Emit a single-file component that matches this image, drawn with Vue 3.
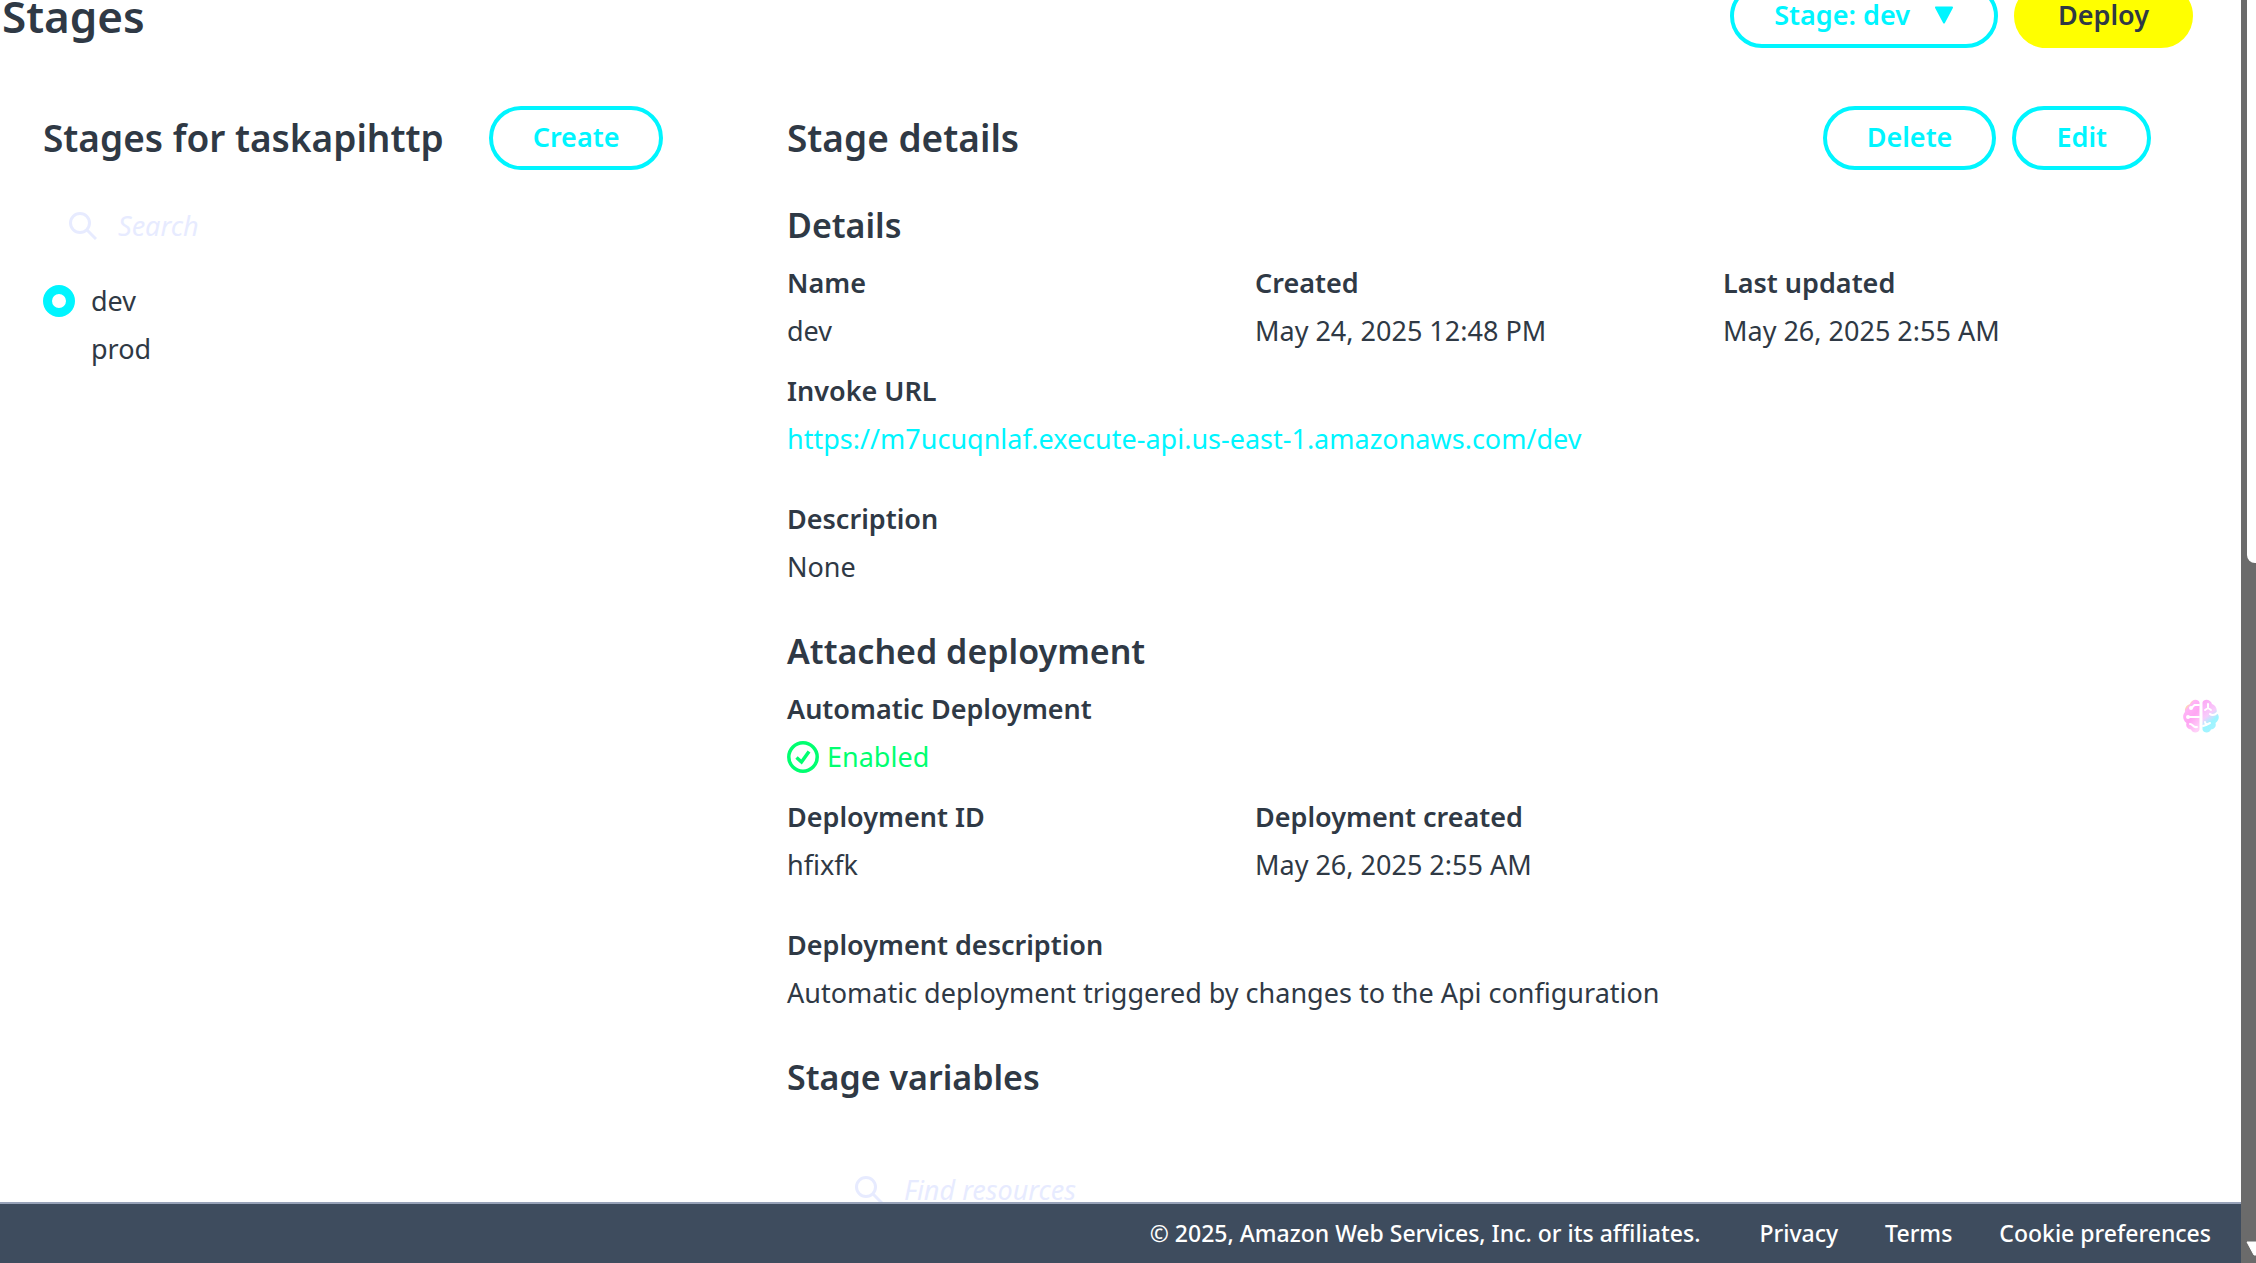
<script setup>
import { ref } from 'vue'

const stages = ['dev', 'prod']
const selected = ref('dev')
const stageQuery = ref('')
const resourceQuery = ref('')
</script>

<template>
  <div class="page">
    <div class="view">
      <main class="content">
        <header class="top">
          <h1>Stages</h1>
          <div class="actions">
            <button type="button" class="btn" aria-haspopup="menu">
              Stage: dev
              <svg class="caret" viewBox="0 0 20 18" aria-hidden="true">
                <path d="M2 1.500h16L10 16.500z" fill="currentColor" stroke="currentColor" stroke-width="2" stroke-linejoin="round" />
              </svg>
            </button>
            <button type="button" class="btn primary">Deploy</button>
          </div>
        </header>

        <div class="columns">
          <section class="stages">
            <div class="bar">
              <h2>Stages for taskapihttp</h2>
              <button type="button" class="btn">Create</button>
            </div>
            <label class="search">
              <svg viewBox="0 0 28 28" aria-hidden="true"><circle cx="11" cy="11" r="9.500" /><path d="M18 18l9 9" /></svg>
              <input v-model="stageQuery" type="text" placeholder="Search" aria-label="Search stages" />
            </label>
            <div class="radios" role="radiogroup" aria-label="Stages">
              <label v-for="s in stages" :key="s">
                <input v-model="selected" type="radio" name="stage" :value="s" />
                {{ s }}
              </label>
            </div>
          </section>

          <section class="details">
            <div class="bar">
              <h2>Stage details</h2>
              <div class="actions">
                <button type="button" class="btn">Delete</button>
                <button type="button" class="btn">Edit</button>
              </div>
            </div>

            <h3 class="first">Details</h3>
            <dl class="grid">
              <div><dt>Name</dt><dd>dev</dd></div>
              <div><dt>Created</dt><dd>May 24, 2025 12:48 PM</dd></div>
              <div><dt>Last updated</dt><dd>May 26, 2025 2:55 AM</dd></div>
              <div class="wide">
                <dt>Invoke URL</dt>
                <dd><a href="https://m7ucuqnlaf.execute-api.us-east-1.amazonaws.com/dev">https://m7ucuqnlaf.execute-api.us-east-1.amazonaws.com/dev</a></dd>
              </div>
            </dl>
            <dl class="grid apart">
              <div class="wide"><dt>Description</dt><dd>None</dd></div>
            </dl>

            <h3>Attached deployment</h3>
            <dl class="grid">
              <div class="wide">
                <dt>Automatic Deployment</dt>
                <dd class="enabled">
                  <svg viewBox="0 0 32 32" aria-hidden="true"><circle cx="16" cy="16" r="14.200" /><path d="M9.500 16.500l5 4.500 7.500-10.500" /></svg>
                  Enabled
                </dd>
              </div>
              <div><dt>Deployment ID</dt><dd>hfixfk</dd></div>
              <div><dt>Deployment created</dt><dd>May 26, 2025 2:55 AM</dd></div>
            </dl>
            <dl class="grid apart">
              <div class="wide"><dt>Deployment description</dt><dd>Automatic deployment triggered by changes to the Api configuration</dd></div>
            </dl>

            <h3>Stage variables</h3>
            <label class="search resources">
              <svg viewBox="0 0 28 28" aria-hidden="true"><circle cx="11" cy="11" r="9.500" /><path d="M18 18l9 9" /></svg>
              <input v-model="resourceQuery" type="text" placeholder="Find resources" aria-label="Find resources" />
            </label>
          </section>
        </div>
      </main>

      <footer class="footer">
        <span>© 2025, Amazon Web Services, Inc. or its affiliates.</span>
        <a href="#privacy">Privacy</a>
        <a href="#terms">Terms</a>
        <a href="#cookies">Cookie preferences</a>
      </footer>
    </div>

    <div class="track" aria-hidden="true">
      <div class="thumb"></div>
      <svg class="arrow" viewBox="0 0 10 22"><path d="M1 1h9v13h-2z" fill="#fff" stroke="#fff" stroke-linejoin="round" /></svg>
    </div>

    <svg class="brain" viewBox="0 0 36 34" aria-hidden="true">
      <defs>
        <linearGradient id="lobe-left" x1="0.100" y1="0" x2="0.700" y2="1">
          <stop offset="0.150" stop-color="#fff27a" />
          <stop offset="0.280" stop-color="#ffb4f6" />
          <stop offset="0.600" stop-color="#ffa6f3" />
          <stop offset="1" stop-color="#ffd0f8" />
        </linearGradient>
        <linearGradient id="lobe-right" x1="0.200" y1="0" x2="0.600" y2="1">
          <stop offset="0" stop-color="#fbaaf5" />
          <stop offset="0.450" stop-color="#f8ccfb" />
          <stop offset="0.700" stop-color="#9cf5ff" />
          <stop offset="1" stop-color="#a8f2ff" />
        </linearGradient>
      </defs>
      <path fill="url(#lobe-left)" d="M16.500 3.500v27C16 34 9.500 35 8 30.500 4 30 2.500 27 3.500 24-.5 21-.8 16 2 13 1.500 8.500 4 6 7 5c1-5 8.500-6 9.500-1.500z" />
      <path fill="url(#lobe-right)" d="M19.500 3.500v27c.5 3.500 7 4.500 8.500 0 4-.5 5.500-3.500 4.500-6.500 4-3 4.300-8 1-10 1-4.500-1-8-4.500-9-1-5-8.500-6-9.500-1.500z" />
      <g fill="none" stroke="#fff" stroke-width="2" stroke-linecap="round">
        <path d="M16 6h-4.500l-3 3M16 18H5M14 28c-4 1-4-3-7-3" />
        <path d="M25 5v4l-3 2M25 9l3 2M34 14c-3 3-6 2-7 1M20 27l3-1-1-3M23 26l4-2" />
        <circle cx="5" cy="18" r="1" /><circle cx="8" cy="9" r="1" />
      </g>
    </svg>
  </div>
</template>

<style>
body {
  background: #fff;
  overflow: hidden;
}
</style>

<style scoped>
.page {
  --cyan: #00f5ff;
  --ink: #2f3945;
  --faint: #e7ebff;
  display: flex;
  height: 100vh;
  position: relative;
  color: var(--ink);
  font: 400 27px/34px "Noto Sans", "Open Sans", sans-serif;
}
.view {
  flex: 1;
  min-width: 0;
  display: flex;
  flex-direction: column;
}
.content {
  flex: 1;
  min-height: 0;
  overflow: hidden;
}
h1, h2, h3, dl, dd { margin: 0; }
h1, h2, h3, dt { font-weight: 600; }
h1 { font-size: 44px; line-height: 64px; }
h2 { font-size: 37px; line-height: 64px; white-space: nowrap; }
h3 { font-size: 34px; line-height: 46px; margin: 44px 0 18px; }
h3.first { margin-top: 32px; }
.top {
  display: flex;
  justify-content: space-between;
  margin-top: -16px;
  padding: 0 48px 0 2px;
}
.actions { display: flex; gap: 16px; }
.columns {
  display: grid;
  grid-template-columns: 620px 1fr;
  column-gap: 124px;
  padding: 58px 90px 0 43px;
}
.bar { display: flex; align-items: center; }
.stages .bar { gap: 45px; }
.details .bar { justify-content: space-between; }
.btn {
  display: flex;
  align-items: center;
  gap: 24px;
  height: 64px;
  padding: 0 40px 2px;
  border: 4px solid var(--cyan);
  border-radius: 32px;
  background: #fff;
  color: var(--cyan);
  font: inherit;
  font-weight: 600;
  white-space: nowrap;
}
.btn.primary {
  background: #ff0;
  border-color: #ff0;
  color: var(--ink);
}
.caret { width: 20px; height: 18px; }
.search {
  display: flex;
  align-items: center;
  gap: 21px;
  height: 64px;
  margin-top: 24px;
  padding-left: 26px;
}
.search svg {
  flex: none;
  width: 28px;
  height: 28px;
  fill: none;
  stroke: var(--faint);
  stroke-width: 3;
}
.search input {
  flex: 1;
  min-width: 0;
  padding: 0;
  border: 0;
  outline: 0;
  background: none;
  color: var(--ink);
  font: inherit;
  font-style: italic;
}
.search input::placeholder { color: var(--faint); opacity: 1; }
.search.resources { margin-top: 58px; padding-left: 68px; }
.radios {
  display: flex;
  flex-direction: column;
  gap: 14px;
  margin-top: 26px;
}
.radios label {
  display: flex;
  align-items: center;
  gap: 16px;
}
.radios input {
  appearance: none;
  width: 32px;
  height: 32px;
  margin: 0;
  border: 2px solid #fff;
  border-radius: 50%;
}
.radios input:checked { border: 9px solid var(--cyan); }
.grid {
  display: grid;
  grid-template-columns: repeat(3, 1fr);
  gap: 26px 40px;
}
.grid.apart { margin-top: 46px; }
.grid .wide { grid-column: 1 / -1; }
dt { margin-bottom: 14px; }
dd a { color: var(--cyan); text-decoration: none; }
.enabled {
  display: flex;
  align-items: center;
  gap: 8px;
  color: #00ff70;
}
.enabled svg {
  width: 32px;
  height: 32px;
  fill: none;
  stroke: currentColor;
  stroke-width: 3.5;
}
.footer {
  display: flex;
  align-items: center;
  justify-content: flex-end;
  gap: 47px;
  height: 57px;
  padding: 0 30px 2px 0;
  border-top: 2px solid #97a2b8;
  background: #3e4c5e;
  color: #fff;
  font-size: 23px;
  font-weight: 500;
}
.footer a {
  color: inherit;
  text-decoration: none;
}
.footer span { margin-right: 12px; }
.track {
  display: flex;
  flex-direction: column;
  justify-content: space-between;
  align-items: flex-end;
  width: 15px;
  background: #6b6b6b;
}
.thumb {
  width: 9px;
  height: 563px;
  border-bottom-left-radius: 8px;
  background: #fff;
}
.arrow { width: 10px; height: 22px; }
.brain {
  position: absolute;
  right: 37px;
  top: 699px;
  width: 36px;
  height: 34px;
}
</style>
